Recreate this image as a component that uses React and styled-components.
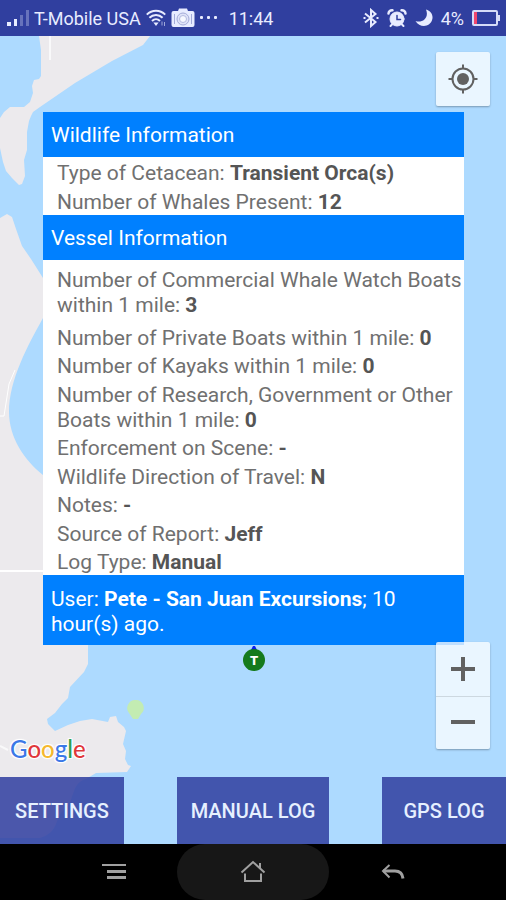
import React from 'react';
import styled, { createGlobalStyle } from 'styled-components';

const GlobalStyle = createGlobalStyle`
  * {
    box-sizing: border-box;
  }
  body {
    margin: 0;
    font-family: Roboto, "Liberation Sans", sans-serif;
    background: #000;
  }
  button {
    border: none;
    padding: 0;
    font-family: inherit;
    cursor: pointer;
  }
  svg {
    display: block;
  }
`;

const Screen = styled.div`
  min-height: 100vh;
  display: flex;
  flex-direction: column;
`;

const StatusBar = styled.header`
  height: 36px;
  flex: none;
  display: flex;
  align-items: center;
  justify-content: space-between;
  padding: 0 6px 0 7px;
  background: #303f9f;
  color: #e8ecff;
  font-size: 18px;
`;

const StatusGroup = styled.div`
  display: flex;
  align-items: center;
  gap: ${({ $gap }) => $gap}px;
`;

const Clock = styled.time`
  margin-left: 6px;
`;

const MapArea = styled.main`
  position: relative;
  flex: 1;
  display: flex;
  flex-direction: column;
  background: #addaff;
`;

const MapCanvas = styled.svg`
  position: absolute;
  inset: 0;
  width: 100%;
  height: 100%;
`;

const InfoWindow = styled.section`
  position: relative;
  margin: 76px 42px 0 43px;
  background: #fff;
`;

const InfoHeading = styled.h2`
  margin: 0;
  padding: 11px 8px 9px;
  background: #0080ff;
  color: #fff;
  font-size: 21px;
  font-weight: 400;
  line-height: 25px;
`;

const InfoBody = styled.div`
  padding: 1px 0 0 14px;
`;

const InfoRow = styled.p`
  margin: 0;
  padding: ${({ $lead }) => ($lead ? '7px 0 4px' : '4px 0 0')};
  color: #707070;
  font-size: 21px;
  line-height: 25px;

  &:nth-child(odd) {
    padding-top: ${({ $lead }) => ($lead ? '7px' : '3px')};
  }

  b {
    color: #555;
  }
`;

const InfoFooter = styled.p`
  margin: 0;
  padding: 12px 8px 8px;
  background: #0080ff;
  color: #fff;
  font-size: 21px;
  line-height: 25px;
`;

const MapControls = styled.div`
  position: absolute;
  right: 16px;
  ${({ $place }) => ($place === 'top' ? 'top: 16px;' : 'bottom: 95px;')}
  width: 54px;
  background: rgba(255, 255, 255, 0.75);
  border-radius: 2px;
  box-shadow: 0 1px 2px rgba(0, 0, 0, 0.3);
`;

const MapButton = styled.button`
  display: flex;
  align-items: center;
  justify-content: center;
  width: 100%;
  height: 54px;
  background: none;

  & + & {
    height: 53px;
    border-top: 1px solid rgba(0, 0, 0, 0.12);
  }
`;

const Attribution = styled.div`
  position: absolute;
  left: 10px;
  bottom: 81px;
  font-family: Lato, sans-serif;
  font-size: 24px;
  font-weight: 500;
  line-height: 28px;
  text-shadow: 0 0 2px #fff, 1px 1px 1px #fff, -1px -1px 1px #fff, 1px -1px 1px #fff, -1px 1px 1px #fff;
`;

const Letter = styled.span`
  color: ${({ $color }) => $color};
`;

const ActionBar = styled.div`
  position: relative;
  margin-top: auto;
  display: flex;
  justify-content: space-between;
`;

const ActionButton = styled.button`
  width: ${({ $wide }) => ($wide ? '30%' : '24.5%')};
  height: 67px;
  background: rgba(48, 63, 159, 0.86);
  color: #e6f0ff;
  font-size: 20px;
  font-weight: 500;
  white-space: nowrap;
`;

const NavBar = styled.nav`
  flex: none;
  height: 56px;
  display: grid;
  grid-template-columns: 1fr 152px 1fr;
  padding: 0 50px;
  background: #000;
`;

const NavButton = styled.button`
  display: flex;
  align-items: center;
  justify-content: center;
  height: 56px;
  border-radius: 28px;
  background: ${({ $home }) => ($home ? '#171717' : 'none')};
`;

const logoLetters = [
  ['G', '#3b78e7'],
  ['o', '#e0383a'],
  ['o', '#f5b82e'],
  ['g', '#3b78e7'],
  ['l', '#2f9e4f'],
  ['e', '#e0383a'],
];

const wildlifeRows = [
  { label: 'Type of Cetacean', value: 'Transient Orca(s)' },
  { label: 'Number of Whales Present', value: '12' },
];

const vesselRows = [
  { label: 'Number of Commercial Whale Watch Boats within 1 mile', value: '3', lead: true },
  { label: 'Number of Private Boats within 1 mile', value: '0' },
  { label: 'Number of Kayaks within 1 mile', value: '0' },
  { label: 'Number of Research, Government or Other Boats within 1 mile', value: '0' },
  { label: 'Enforcement on Scene', value: '-' },
  { label: 'Wildlife Direction of Travel', value: 'N' },
  { label: 'Notes', value: '-' },
  { label: 'Source of Report', value: 'Jeff' },
  { label: 'Log Type', value: 'Manual' },
];

const SignalIcon = () => (
  <svg width="22" height="20" viewBox="0 0 22 20" fill="#e8ecff">
    <rect x="0" y="14" width="4" height="4" />
    <rect x="7" y="11" width="3" height="7" />
    <rect x="13" y="7" width="3" height="11" opacity="0.3" />
    <rect x="19" y="2" width="3" height="16" opacity="0.3" />
  </svg>
);

const WifiIcon = () => (
  <svg width="20" height="18" viewBox="0 0 20 18" fill="none" stroke="#e8ecff" strokeWidth="2">
    <path d="M0.8 5.6C6 0.4 14 0.4 19.2 5.6" />
    <path d="M3.4 8.8c3.8-3.8 9.4-3.8 13.2 0" />
    <path d="M6 12c2.4-2.4 5.6-2.4 8 0" />
    <path d="M7.4 13.6h5.2L10 17z" fill="#e8ecff" stroke="none" />
    <path d="M16 12.5v4M18.5 13v4" strokeWidth="1" opacity="0.6" />
  </svg>
);

const CameraIcon = () => (
  <svg width="24" height="20" viewBox="0 0 24 20">
    <path
      fill="#e8ecff"
      d="M2.5 3H7l1-2.5h8L17 3h4.5a2 2 0 0 1 2 2v12a2 2 0 0 1-2 2h-19a2 2 0 0 1-2-2V5a2 2 0 0 1 2-2z"
    />
    <circle cx="12" cy="11" r="6" fill="#dfe3f8" stroke="#a4abd8" strokeWidth="1" />
    <circle cx="12" cy="11" r="3.5" fill="#f6f8ff" stroke="#b4bae0" />
    <path d="M3.5 6v10M20.5 6v10" stroke="#a4abd8" />
  </svg>
);

const DotsIcon = () => (
  <svg width="18" height="6" viewBox="0 0 18 6" fill="#e8ecff">
    <rect x="0" y="1" width="3" height="3" rx="1" />
    <rect x="7" y="1" width="3" height="3" rx="1" />
    <rect x="14" y="1" width="3" height="3" rx="1" />
  </svg>
);

const BluetoothIcon = () => (
  <svg width="16" height="20" viewBox="0 0 16 20" fill="none" stroke="#e8ecff" strokeWidth="2">
    <path d="M2 5.5l10.5 8.5L8 18V2l4.5 4L2 14.5" />
    <path d="M0.5 10h2M13.5 10h2" />
  </svg>
);

const AlarmIcon = () => (
  <svg width="20" height="20" viewBox="0 0 20 20" fill="none" stroke="#e8ecff" strokeLinecap="round">
    <circle cx="10" cy="11" r="7" fill="#e8ecff" />
    <path d="M1.5 5.5A3.5 3.5 0 0 1 5.5 2.2M18.5 5.5A3.5 3.5 0 0 0 14.5 2.2" strokeWidth="2.5" />
    <path d="M5 16.500L3.5 18M15 16.5l1.5 1.5" strokeWidth="2" />
    <path d="M10 7.500v4h3.500" stroke="#303f9f" strokeWidth="1.500" />
  </svg>
);

const MoonIcon = () => (
  <svg width="18" height="18" viewBox="0 0 18 18" fill="#e8ecff">
    <path d="M11 0.500C16 2 18.500 6 17.200 10.500C15.500 18 5 19.500 0.500 12C7 14.500 14.500 9 11 0.500z" />
  </svg>
);

const BatteryIcon = () => (
  <svg width="28" height="18" viewBox="0 0 28 18">
    <rect x="1" y="2" width="24" height="14" rx="1" fill="none" stroke="#d6dcf8" strokeWidth="2" />
    <rect x="2" y="3" width="3" height="12" fill="#f0466e" />
    <rect x="26" y="6" width="2" height="6" fill="#d6dcf8" />
  </svg>
);

const LocateIcon = () => (
  <svg width="30" height="30" viewBox="0 0 30 30" fill="none" stroke="#616161" strokeWidth="2">
    <circle cx="15" cy="15" r="10.5" />
    <circle cx="15" cy="15" r="6" fill="#616161" stroke="none" />
    <path d="M15 0.5v4M15 25.5v4M0.5 15h4M25.5 15h4" />
  </svg>
);

const PlusIcon = () => (
  <svg width="24" height="24" viewBox="0 0 24 24" fill="#616161">
    <path d="M10 0h4v10h10v4H14v10h-4V14H0v-4h10z" />
  </svg>
);

const MinusIcon = () => (
  <svg width="24" height="24" viewBox="0 0 24 24" fill="#616161">
    <rect x="0" y="9" width="24" height="4" />
  </svg>
);

const MenuIcon = () => (
  <svg width="24" height="16" viewBox="0 0 24 16" fill="#a0a0a0">
    <rect x="0" y="0" width="24" height="2" />
    <rect x="5" y="6" width="19" height="3" />
    <rect x="5" y="12" width="19" height="3" />
  </svg>
);

const HomeIcon = () => (
  <svg width="26" height="24" viewBox="0 0 26 24" fill="none" stroke="#a0a0a0" strokeWidth="2">
    <path d="M1.5 12.5L13 2l11.5 10.5" />
    <path d="M20 8V3" />
    <path d="M5 13.5V21h16v-7.5" />
  </svg>
);

const BackIcon = () => (
  <svg width="24" height="16" viewBox="0 0 24 16" fill="none" stroke="#a0a0a0" strokeWidth="2">
    <path d="M8.5 1L2 7l6.5 6.5" />
    <path d="M2 7h12c5 0 7.5 2.5 8 7.5" strokeWidth="3" />
  </svg>
);

const MapBackground = () => (
  <MapCanvas viewBox="0 36 506 808" preserveAspectRatio="xMinYMin slice" aria-hidden="true">
    <g fill="#eceaed">
      <path d="M39 36L41 50V76L39 79L34 80L32 86L33 93L30 102L24 107L10 107L4 112L0 118V148L3 162L6 171L12 178L19 185L22 184L25 176L24 160L27 150V132L29 121L31 116L33 112L40 107L75 83L112 61L143 45L150 36Z" />
      <path d="M0 218L7 214L12 217L16 229L22 246L31 259L43 278L60 296L43 318C28 345 9 380 9 412C9 437 24 460 43 475L100 560L88 646V664L84 672L70 687L68 698L62 704L55 713L47 719L48 724L55 731L68 725L80 721L92 719L108 722L110 717L116 716L118 722L124 727L126 731L123 744L126 751L125 759L128 765L131 766L127 772L96 773L86 779C70 784 76 800 64 810C54 818 60 832 40 838H0Z" />
    </g>
    <g fill="none" stroke="#fff">
      <path d="M0 571H43" strokeWidth="2" />
      <path d="M50 36V60" strokeWidth="2" opacity="0.7" />
      <path d="M0 416H4L9 384L15 370" strokeWidth="1" />
      <path d="M0 746L8 750" strokeWidth="2" opacity="0.7" />
    </g>
    <path fill="#c3ecb2" d="M135 700a8 8 0 0 1 6 14l-3 5h-5l-4-6a8 8 0 0 1 6-13z" />
    <path fill="#0a1ef0" d="M251 650l2-4h2l2 4z" />
    <circle cx="254" cy="660" r="11" fill="#147a1c" />
    <text x="254" y="665" textAnchor="middle" fontFamily="Roboto, sans-serif" fontSize="13" fontWeight="900" fill="#fff">
      T
    </text>
  </MapCanvas>
);

const InfoRows = ({ rows }) => (
  <InfoBody>
    {rows.map((row) => (
      <InfoRow key={row.label} $lead={row.lead}>
        {row.label}: <b>{row.value}</b>
      </InfoRow>
    ))}
  </InfoBody>
);

function App() {
  return (
    <Screen>
      <GlobalStyle />
      <StatusBar>
        <StatusGroup $gap={5}>
          <SignalIcon />
          <span>T-Mobile USA</span>
          <WifiIcon />
          <CameraIcon />
          <DotsIcon />
          <Clock>11:44</Clock>
        </StatusGroup>
        <StatusGroup $gap={8}>
          <BluetoothIcon />
          <AlarmIcon />
          <MoonIcon />
          <span>4%</span>
          <BatteryIcon />
        </StatusGroup>
      </StatusBar>

      <MapArea>
        <MapBackground />
        <InfoWindow>
          <InfoHeading>Wildlife Information</InfoHeading>
          <InfoRows rows={wildlifeRows} />
          <InfoHeading>Vessel Information</InfoHeading>
          <InfoRows rows={vesselRows} />
          <InfoFooter>
            User: <b>Pete - San Juan Excursions</b>; 10 hour(s) ago.
          </InfoFooter>
        </InfoWindow>

        <MapControls $place="top">
          <MapButton aria-label="My location">
            <LocateIcon />
          </MapButton>
        </MapControls>
        <MapControls $place="bottom">
          <MapButton aria-label="Zoom in">
            <PlusIcon />
          </MapButton>
          <MapButton aria-label="Zoom out">
            <MinusIcon />
          </MapButton>
        </MapControls>

        <Attribution>
          {logoLetters.map(([char, color], i) => (
            <Letter key={i} $color={color}>{char}</Letter>
          ))}
        </Attribution>

        <ActionBar>
          <ActionButton>SETTINGS</ActionButton>
          <ActionButton $wide>MANUAL LOG</ActionButton>
          <ActionButton>GPS LOG</ActionButton>
        </ActionBar>
      </MapArea>

      <NavBar>
        <NavButton aria-label="Menu">
          <MenuIcon />
        </NavButton>
        <NavButton $home aria-label="Home">
          <HomeIcon />
        </NavButton>
        <NavButton aria-label="Back">
          <BackIcon />
        </NavButton>
      </NavBar>
    </Screen>
  );
}

export default App;
